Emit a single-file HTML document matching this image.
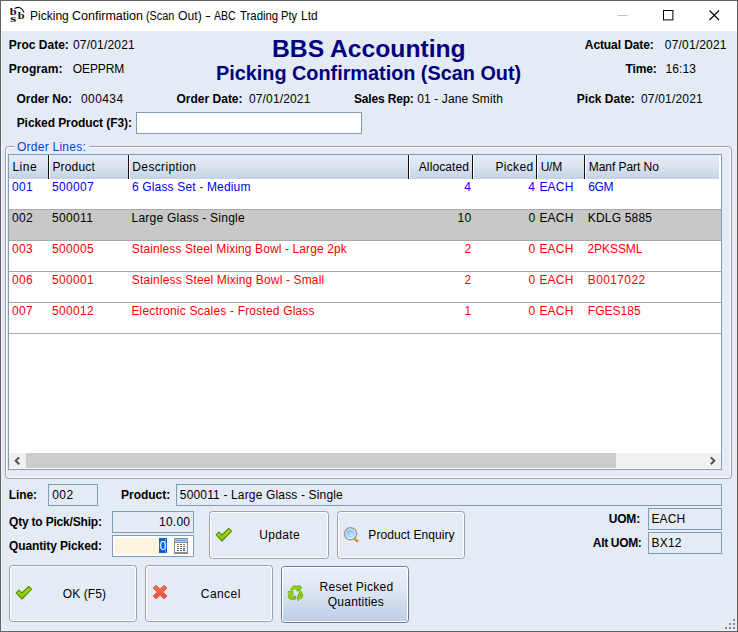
<!DOCTYPE html>
<html><head><meta charset="utf-8"><title>Picking Confirmation (Scan Out) - ABC Trading Pty Ltd</title>
<style>
*{box-sizing:border-box;margin:0;padding:0}
html,body{width:738px;height:632px;overflow:hidden;background:#e4ebf5}
body{font-family:"Liberation Sans",sans-serif;font-size:12px;color:#000;position:relative}
.a{position:absolute}
.win{position:absolute;left:0;top:0;width:738px;height:632px;background:#e4ebf5;border:1px solid #636363;box-shadow:inset 1px 0 0 #edf1f8, inset 0 -1px 0 #edf1f8}
.tb{position:absolute;left:1px;top:1px;width:736px;height:30px;background:#fff}
.t{position:absolute;white-space:nowrap}
.ttl{position:absolute;left:0;top:0;width:0;height:0}
.fld{position:absolute;border:1px solid #7f9db9;background:#e4ebf5;height:22px}
.btn{position:absolute;border:1px solid #a0a0a0;border-radius:3.5px;background:#e5ebf5;box-shadow:inset 0 0 0 1px #fff}
.hdr{position:absolute;left:9px;top:155px;width:710px;height:24px;background:linear-gradient(#e5ebf5,#dbe4f0 45%,#c4d2e6)}
.sep{position:absolute;top:155px;width:2px;height:24px;border-left:1px solid #101010;border-right:1px solid #fff}
.rl{position:absolute;left:9px;width:712px;height:1px;background:#a9a9a9}
.sb{position:absolute;left:9px;top:453px;width:712px;height:15px;background:#f0f0f0}
.sb .thumb{position:absolute;left:17px;top:0;width:590px;height:15px;background:#cdcdcd}
.sb svg{position:absolute;top:0}
</style></head><body>
<div class="win"></div>
<div class="tb"></div>
<svg class="a" style="left:8px;top:4px" width="20" height="20" viewBox="8 4 20 20">
<g font-family="'Liberation Serif',serif" font-weight="bold" font-size="10.8px" fill="#111">
<text x="9.7" y="14.9" textLength="6.9" lengthAdjust="spacingAndGlyphs">b</text><text x="17.7" y="18.9" textLength="6.9" lengthAdjust="spacingAndGlyphs">b</text><text x="10" y="21.9" textLength="6.2" lengthAdjust="spacingAndGlyphs">s</text></g>
<path d="M14.6 8.6 Q20.5 4.8 24.1 12.4" fill="none" stroke="#111" stroke-width="1.1"/>
</svg>

<svg class="a" style="left:600px;top:0" width="138" height="31" viewBox="0 0 138 31">
<path d="M17.5 15.5H27.5" stroke="#c0c0c0" stroke-width="1" fill="none"/>
<rect x="63.5" y="10.5" width="9.4" height="9.4" fill="none" stroke="#000" stroke-width="1"/>
<path d="M109.5 10.5L119 20M119 10.5L109.5 20" stroke="#000" stroke-width="1.1" fill="none"/>
</svg>

<div class="fld" style="left:136px;top:112px;width:226px;background:#fff"></div>

<!-- group box -->
<div class="a" style="left:5px;top:146px;width:727px;height:333px;border:1px solid #a0a0a0;border-radius:4px;box-shadow:inset 0 0 0 1px #fff"></div>

<!-- table -->
<div class="a" style="left:8px;top:154px;width:714px;height:316px;border:1px solid #7f9db9;background:#fff"></div>
<div class="hdr"></div>
<div class="sep" style="left:48px"></div><div class="sep" style="left:128px"></div><div class="sep" style="left:408px"></div><div class="sep" style="left:472px"></div><div class="sep" style="left:536px"></div><div class="sep" style="left:584px"></div>
<div class="a" style="left:9px;top:210px;width:712px;height:30px;background:#c8c8c8"></div>
<div class="rl" style="top:209px"></div><div class="rl" style="top:240px"></div><div class="rl" style="top:271px"></div><div class="rl" style="top:302px"></div><div class="rl" style="top:333px"></div>
<div class="sb"><div class="thumb"></div>
<svg style="left:0" width="17" height="15" viewBox="0 0 17 15"><path d="M10.2 4.4 L6.7 7.8 L10.2 11.2" fill="none" stroke="#505050" stroke-width="2"/></svg>
<svg style="right:0" width="17" height="15" viewBox="0 0 17 15"><path d="M6.8 4.4 L10.3 7.8 L6.8 11.2" fill="none" stroke="#505050" stroke-width="2"/></svg>
</div>

<!-- bottom fields -->
<div class="fld" style="left:48px;top:484px;width:50px"></div>
<div class="fld" style="left:176px;top:484px;width:546px"></div>
<div class="fld" style="left:112px;top:511px;width:82px"></div>
<div class="fld" style="left:112px;top:535px;width:82px;background:#fff"></div>
<div class="a" style="left:115px;top:538px;width:54px;height:16px;background:#fdf3df"></div>
<div class="a" style="left:159px;top:538px;width:8px;height:15px;background:#0a60d0"></div>
<div class="a" style="left:165px;top:538px;width:1px;height:15px;background:#e08020"></div>
<svg class="a" style="left:174px;top:538px" width="14" height="16" viewBox="0 0 14 16" shape-rendering="crispEdges">
<rect x="0" y="0" width="14" height="16" fill="#8c8c8c"/>
<rect x="1" y="1" width="12" height="3" fill="#a5cdf8"/>
<rect x="2" y="2" width="10" height="1" fill="#5c9ef0"/>
<rect x="1" y="5" width="12" height="9" fill="#fff"/>
<rect x="3" y="6" width="2" height="1" fill="#f06a10"/><rect x="6" y="6" width="2" height="1" fill="#707070"/><rect x="9" y="6" width="2" height="1" fill="#f06a10"/>
<rect x="3" y="8" width="2" height="1" fill="#707070"/><rect x="6" y="8" width="2" height="1" fill="#707070"/><rect x="9" y="8" width="2" height="1" fill="#707070"/>
<rect x="3" y="10" width="2" height="1" fill="#707070"/><rect x="6" y="10" width="2" height="1" fill="#707070"/>
<rect x="3" y="12" width="2" height="1" fill="#707070"/><rect x="6" y="12" width="2" height="1" fill="#707070"/>
<rect x="9" y="10" width="2" height="3" fill="#4a94f0"/>
</svg>
<div class="t" style="left:159.6px;top:538.8px;font-size:12px;line-height:14px;color:#fff">0</div>

<div class="fld" style="left:648px;top:508px;width:74px"></div>
<div class="fld" style="left:648px;top:532px;width:74px"></div>

<!-- buttons -->
<div class="btn" style="left:209px;top:511px;width:120px;height:48px"></div>
<div class="btn" style="left:337px;top:511px;width:128px;height:48px"></div>
<div class="btn" style="left:9px;top:565px;width:128px;height:57px"></div>
<div class="btn" style="left:145px;top:565px;width:128px;height:57px"></div>
<div class="btn" style="left:281px;top:566px;width:128px;height:57px;border-color:#6f7d92;background:linear-gradient(#eaf0f8,#dfe7f3 40%,#bccde6)"></div>
<svg width="0" height="0" style="position:absolute"><defs>
<linearGradient id="gk" x1="0" y1="0" x2="0" y2="1"><stop offset="0" stop-color="#c8dc10"/><stop offset="1" stop-color="#7cc000"/></linearGradient>
<radialGradient id="lens" cx="0.62" cy="0.68" r="0.75"><stop offset="0" stop-color="#b4ecfa"/><stop offset="0.7" stop-color="#8ccdf5"/><stop offset="1" stop-color="#4ea2ee"/></radialGradient>
<linearGradient id="gx" x1="0" y1="0" x2="0" y2="1"><stop offset="0" stop-color="#f47860"/><stop offset="1" stop-color="#ea4c32"/></linearGradient>
<linearGradient id="gr" x1="0" y1="0" x2="1" y2="1"><stop offset="0" stop-color="#a4dc08"/><stop offset="1" stop-color="#86c600"/></linearGradient>
</defs></svg>
<svg class="a" style="left:15px;top:585px" width="19" height="16" viewBox="0 0 19 16"><path d="M3.9 5.2 L7 8 L13.7 1.5 L16.5 4.2 L7 14 L1.2 7.9 Z" fill="url(#gk)" stroke="#4b9200" stroke-width="1.1" stroke-linejoin="round"/></svg>
<svg class="a" style="left:215px;top:527px" width="19" height="16" viewBox="0 0 19 16"><path d="M3.9 5.2 L7 8 L13.7 1.5 L16.5 4.2 L7 14 L1.2 7.9 Z" fill="url(#gk)" stroke="#4b9200" stroke-width="1.1" stroke-linejoin="round"/></svg>
<svg class="a" style="left:152px;top:584px" width="16" height="16" viewBox="0 0 16 16">
<path d="M4.05 1.25 L8.05 5.25 L12.05 1.25 L14.85 4.05 L10.85 8.05 L14.85 12.05 L12.05 14.85 L8.05 10.85 L4.05 14.85 L1.25 12.05 L5.25 8.05 L1.25 4.05 Z" fill="url(#gx)" stroke="#de4528" stroke-width="0.9" stroke-linejoin="round"/>
</svg>
<svg class="a" style="left:343px;top:526px" width="18" height="18" viewBox="0 0 18 18">
<path d="M11.6 12 L14 14.6" stroke="#d98c1c" stroke-width="3.2" stroke-linecap="round"/>
<path d="M12.6 11.6 L14.4 13.4" stroke="#fdf0d4" stroke-width="1.1" stroke-linecap="round"/>
<circle cx="7.5" cy="7.8" r="6" fill="#fff" stroke="#9a9a9a" stroke-width="1.6"/>
<circle cx="7.5" cy="7.8" r="4.3" fill="url(#lens)"/>
</svg>
<svg class="a" style="left:287px;top:585px" width="17" height="17" viewBox="0 0 17 17">
<g fill="url(#gr)" stroke="#55a200" stroke-width="0.7" stroke-linejoin="round">
<path d="M3.5 4.4 L5.7 1.5 L6.6 1.0 L10.6 1.0 L11.2 0.3 L14.8 2.2 L12.6 5.9 L9.7 5.9 L10.3 3.8 L7.3 3.8 L5.7 5.7 Z"/><path d="M14.0 6.3 L15.8 10.2 L15.3 12.6 L13.4 13.8 L11.5 13.8 L11.5 16.0 L10.1 12.5 L11.6 9.2 L11.6 11.1 L12.7 11.1 L13.2 10.2 L11.9 7.5 Z"/><path d="M1.0 6.5 L5.3 6.3 L6.5 9.4 L4.9 8.9 L4.1 10.4 L4.5 11.2 L8.6 11.2 L8.6 14.2 L3.5 14.2 L1.9 13.3 L1.2 11.0 L2.4 8.3 L0.8 7.7 Z"/>
</g></svg>

<!-- resize grip -->
<svg class="a" style="left:724px;top:618px" width="12" height="12" viewBox="0 0 12 12" fill="#8a8a8a"><rect x="9" y="1" width="2" height="2"/><rect x="5" y="5" width="2" height="2"/><rect x="9" y="5" width="2" height="2"/><rect x="1" y="9" width="2" height="2"/><rect x="5" y="9" width="2" height="2"/><rect x="9" y="9" width="2" height="2"/></svg>

<div class="t" style="left:8.70px;top:37.84px;font-size:12px;line-height:14px;letter-spacing:0.015px;color:#000;font-weight:bold">Proc Date:</div>
<div class="t" style="left:72.93px;top:37.84px;font-size:12px;line-height:14px;letter-spacing:0.188px;color:#000">07/01/2021</div>
<div class="t" style="left:8.70px;top:61.84px;font-size:12px;line-height:14px;letter-spacing:0.073px;color:#000;font-weight:bold">Program:</div>
<div class="t" style="left:72.83px;top:61.84px;font-size:12px;line-height:14px;letter-spacing:-0.111px;color:#000">OEPPRM</div>
<div class="t" style="left:584.80px;top:37.84px;font-size:12px;line-height:14px;letter-spacing:-0.087px;color:#000;font-weight:bold">Actual Date:</div>
<div class="t" style="left:664.83px;top:37.84px;font-size:12px;line-height:14px;letter-spacing:0.177px;color:#000">07/01/2021</div>
<div class="t" style="left:625.57px;top:61.84px;font-size:12px;line-height:14px;letter-spacing:-0.154px;color:#000;font-weight:bold">Time:</div>
<div class="t" style="left:665.59px;top:61.84px;font-size:12px;line-height:14px;letter-spacing:0.078px;color:#000">16:13</div>
<div class="t" style="left:16.51px;top:91.84px;font-size:12px;line-height:14px;letter-spacing:-0.057px;color:#000;font-weight:bold">Order No:</div>
<div class="t" style="left:81.03px;top:91.84px;font-size:12px;line-height:14px;letter-spacing:0.415px;color:#000">000434</div>
<div class="t" style="left:176.51px;top:91.84px;font-size:12px;line-height:14px;letter-spacing:0.003px;color:#000;font-weight:bold">Order Date:</div>
<div class="t" style="left:248.93px;top:91.84px;font-size:12px;line-height:14px;letter-spacing:0.155px;color:#000">07/01/2021</div>
<div class="t" style="left:353.95px;top:91.84px;font-size:12px;line-height:14px;letter-spacing:-0.162px;color:#000;font-weight:bold">Sales Rep:</div>
<div class="t" style="left:417.23px;top:91.84px;font-size:12px;line-height:14px;letter-spacing:0.115px;color:#000">01 - Jane Smith</div>
<div class="t" style="left:576.80px;top:91.84px;font-size:12px;line-height:14px;letter-spacing:0.004px;color:#000;font-weight:bold">Pick Date:</div>
<div class="t" style="left:641.03px;top:91.84px;font-size:12px;line-height:14px;letter-spacing:0.177px;color:#000">07/01/2021</div>
<div class="t" style="left:16.70px;top:115.84px;font-size:12px;line-height:14px;letter-spacing:-0.075px;color:#000;font-weight:bold">Picked Product (F3):</div>
<div class="t" style="left:12.42px;top:159.84px;font-size:12px;line-height:14px;letter-spacing:0.543px;color:#000">Line</div>
<div class="t" style="left:52.42px;top:159.84px;font-size:12px;line-height:14px;letter-spacing:0.169px;color:#000">Product</div>
<div class="t" style="left:132.32px;top:159.84px;font-size:12px;line-height:14px;letter-spacing:0.364px;color:#000">Description</div>
<div class="t" style="left:418.78px;top:159.84px;font-size:12px;line-height:14px;letter-spacing:0.104px;color:#000">Allocated</div>
<div class="t" style="left:495.52px;top:159.84px;font-size:12px;line-height:14px;letter-spacing:0.308px;color:#000">Picked</div>
<div class="t" style="left:540.67px;top:159.84px;font-size:12px;line-height:14px;letter-spacing:-0.243px;color:#000">U/M</div>
<div class="t" style="left:588.82px;top:159.84px;font-size:12px;line-height:14px;letter-spacing:-0.064px;color:#000">Manf Part No</div>
<div class="t" style="left:8.70px;top:487.84px;font-size:12px;line-height:14px;letter-spacing:-0.102px;color:#000;font-weight:bold">Line:</div>
<div class="t" style="left:52.13px;top:487.84px;font-size:12px;line-height:14px;letter-spacing:0.575px;color:#000">002</div>
<div class="t" style="left:121.00px;top:487.84px;font-size:12px;line-height:14px;letter-spacing:-0.01px;color:#000;font-weight:bold">Product:</div>
<div class="t" style="left:179.82px;top:487.84px;font-size:12px;line-height:14px;letter-spacing:0.157px;color:#000">500011 - Large Glass - Single</div>
<div class="t" style="left:9.01px;top:514.84px;font-size:12px;line-height:14px;letter-spacing:-0.192px;color:#000;font-weight:bold">Qty to Pick/Ship:</div>
<div class="t" style="left:158.99px;top:514.84px;font-size:12px;line-height:14px;letter-spacing:0.238px;color:#000">10.00</div>
<div class="t" style="left:9.01px;top:538.84px;font-size:12px;line-height:14px;letter-spacing:-0.116px;color:#000;font-weight:bold">Quantity Picked:</div>
<div class="t" style="left:608.68px;top:511.84px;font-size:12px;line-height:14px;letter-spacing:-0.172px;color:#000;font-weight:bold">UOM:</div>
<div class="t" style="left:651.52px;top:511.84px;font-size:12px;line-height:14px;letter-spacing:0.074px;color:#000">EACH</div>
<div class="t" style="left:592.80px;top:535.84px;font-size:12px;line-height:14px;letter-spacing:-0.324px;color:#000;font-weight:bold">Alt UOM:</div>
<div class="t" style="left:651.52px;top:535.84px;font-size:12px;line-height:14px;letter-spacing:0.177px;color:#000">BX12</div>
<div class="t" style="left:259.37px;top:527.84px;font-size:12px;line-height:14px;letter-spacing:0.313px;color:#000">Update</div>
<div class="t" style="left:368.32px;top:527.84px;font-size:12px;line-height:14px;letter-spacing:0.066px;color:#000">Product Enquiry</div>
<div class="t" style="left:62.83px;top:586.84px;font-size:12px;line-height:14px;letter-spacing:0.091px;color:#000">OK (F5)</div>
<div class="t" style="left:200.79px;top:586.84px;font-size:12px;line-height:14px;letter-spacing:0.432px;color:#000">Cancel</div>
<div class="t" style="left:319.62px;top:579.84px;font-size:12px;line-height:14px;letter-spacing:0.251px;color:#000">Reset Picked</div>
<div class="t" style="left:327.83px;top:594.84px;font-size:12px;line-height:14px;letter-spacing:0.208px;color:#000">Quantities</div>
<div class="t" style="left:16.93px;top:139.84px;font-size:12px;line-height:14px;letter-spacing:0.258px;color:#0046d5;background:#e4ebf5;padding:0 3px 0 2px;margin-left:-2px">Order Lines:</div>
<div class="t" style="left:12.03px;top:179.84px;font-size:12px;line-height:14px;letter-spacing:0.317px;color:#0000ff">001</div>
<div class="t" style="left:52.12px;top:179.84px;font-size:12px;line-height:14px;letter-spacing:0.328px;color:#0000ff">500007</div>
<div class="t" style="left:131.89px;top:179.84px;font-size:12px;line-height:14px;letter-spacing:0.165px;color:#0000ff">6 Glass Set - Medium</div>
<div class="t" style="left:464.28px;top:179.84px;font-size:12px;line-height:14px;letter-spacing:0.33px;color:#0000ff">4</div>
<div class="t" style="left:528.28px;top:179.84px;font-size:12px;line-height:14px;letter-spacing:0.33px;color:#0000ff">4</div>
<div class="t" style="left:539.42px;top:179.84px;font-size:12px;line-height:14px;letter-spacing:0.208px;color:#0000ff">EACH</div>
<div class="t" style="left:588.19px;top:179.84px;font-size:12px;line-height:14px;letter-spacing:-0.405px;color:#0000ff">6GM</div>
<div class="t" style="left:12.03px;top:210.84px;font-size:12px;line-height:14px;letter-spacing:0.325px;color:#000">002</div>
<div class="t" style="left:52.12px;top:210.84px;font-size:12px;line-height:14px;letter-spacing:0.325px;color:#000">500011</div>
<div class="t" style="left:131.52px;top:210.84px;font-size:12px;line-height:14px;letter-spacing:0.231px;color:#000">Large Glass - Single</div>
<div class="t" style="left:457.39px;top:210.84px;font-size:12px;line-height:14px;letter-spacing:0.33px;color:#000">10</div>
<div class="t" style="left:528.39px;top:210.84px;font-size:12px;line-height:14px;letter-spacing:0.33px;color:#000">0</div>
<div class="t" style="left:539.42px;top:210.84px;font-size:12px;line-height:14px;letter-spacing:0.208px;color:#000">EACH</div>
<div class="t" style="left:587.82px;top:210.84px;font-size:12px;line-height:14px;letter-spacing:0.185px;color:#000">KDLG 5885</div>
<div class="t" style="left:12.03px;top:241.84px;font-size:12px;line-height:14px;letter-spacing:0.287px;color:#ff0000">003</div>
<div class="t" style="left:52.12px;top:241.84px;font-size:12px;line-height:14px;letter-spacing:0.308px;color:#ff0000">500005</div>
<div class="t" style="left:131.86px;top:241.84px;font-size:12px;line-height:14px;letter-spacing:0.107px;color:#ff0000">Stainless Steel Mixing Bowl - Large 2pk</div>
<div class="t" style="left:464.53px;top:241.84px;font-size:12px;line-height:14px;letter-spacing:0.33px;color:#ff0000">2</div>
<div class="t" style="left:528.39px;top:241.84px;font-size:12px;line-height:14px;letter-spacing:0.33px;color:#ff0000">0</div>
<div class="t" style="left:539.42px;top:241.84px;font-size:12px;line-height:14px;letter-spacing:0.208px;color:#ff0000">EACH</div>
<div class="t" style="left:587.50px;top:241.84px;font-size:12px;line-height:14px;letter-spacing:-0.076px;color:#ff0000">2PKSSML</div>
<div class="t" style="left:12.03px;top:272.84px;font-size:12px;line-height:14px;letter-spacing:0.287px;color:#ff0000">006</div>
<div class="t" style="left:52.12px;top:272.84px;font-size:12px;line-height:14px;letter-spacing:0.325px;color:#ff0000">500001</div>
<div class="t" style="left:131.86px;top:272.84px;font-size:12px;line-height:14px;letter-spacing:0.143px;color:#ff0000">Stainless Steel Mixing Bowl - Small</div>
<div class="t" style="left:464.53px;top:272.84px;font-size:12px;line-height:14px;letter-spacing:0.33px;color:#ff0000">2</div>
<div class="t" style="left:528.39px;top:272.84px;font-size:12px;line-height:14px;letter-spacing:0.33px;color:#ff0000">0</div>
<div class="t" style="left:539.42px;top:272.84px;font-size:12px;line-height:14px;letter-spacing:0.208px;color:#ff0000">EACH</div>
<div class="t" style="left:587.82px;top:272.84px;font-size:12px;line-height:14px;letter-spacing:0.367px;color:#ff0000">B0017022</div>
<div class="t" style="left:12.03px;top:303.84px;font-size:12px;line-height:14px;letter-spacing:0.325px;color:#ff0000">007</div>
<div class="t" style="left:52.12px;top:303.84px;font-size:12px;line-height:14px;letter-spacing:0.328px;color:#ff0000">500012</div>
<div class="t" style="left:131.42px;top:303.84px;font-size:12px;line-height:14px;letter-spacing:0.179px;color:#ff0000">Electronic Scales - Frosted Glass</div>
<div class="t" style="left:464.51px;top:303.84px;font-size:12px;line-height:14px;letter-spacing:0.33px;color:#ff0000">1</div>
<div class="t" style="left:528.39px;top:303.84px;font-size:12px;line-height:14px;letter-spacing:0.33px;color:#ff0000">0</div>
<div class="t" style="left:539.42px;top:303.84px;font-size:12px;line-height:14px;letter-spacing:0.208px;color:#ff0000">EACH</div>
<div class="t" style="left:587.82px;top:303.84px;font-size:12px;line-height:14px;letter-spacing:0.032px;color:#ff0000">FGES185</div>
<div class="t" style="left:272.05px;top:33.96px;font-size:24.66px;line-height:30px;letter-spacing:0px;color:#000080;font-weight:bold">BBS Accounting</div>
<div class="t" style="left:215.97px;top:60.63px;font-size:19.83px;line-height:24px;letter-spacing:0px;color:#000080;font-weight:bold">Picking Confirmation (Scan Out)</div>
<div class="ttl"><span class="t" style="left:29.81px;top:8.84px;font-size:12px;line-height:14px;color:#000;transform:scaleX(1.002);transform-origin:0 0">Picking</span> <span class="t" style="left:72.06px;top:8.84px;font-size:12px;line-height:14px;color:#000;transform:scaleX(1.044);transform-origin:0 0">Confirmation</span> <span class="t" style="left:146.33px;top:8.84px;font-size:12px;line-height:14px;color:#000;transform:scaleX(0.902);transform-origin:0 0">(Scan</span> <span class="t" style="left:178.02px;top:8.84px;font-size:12px;line-height:14px;color:#000;transform:scaleX(1.017);transform-origin:0 0">Out)</span> <span class="t" style="left:204.60px;top:8.84px;font-size:12px;line-height:14px;color:#000;transform:scaleX(1.502);transform-origin:0 0">-</span> <span class="t" style="left:213.58px;top:8.84px;font-size:12px;line-height:14px;color:#000;transform:scaleX(0.880);transform-origin:0 0">ABC</span> <span class="t" style="left:239.54px;top:8.84px;font-size:12px;line-height:14px;color:#000;transform:scaleX(0.948);transform-origin:0 0">Trading</span> <span class="t" style="left:281.29px;top:8.84px;font-size:12px;line-height:14px;color:#000;transform:scaleX(0.925);transform-origin:0 0">Pty</span> <span class="t" style="left:300.82px;top:8.84px;font-size:12px;line-height:14px;color:#000;transform:scaleX(0.998);transform-origin:0 0">Ltd</span></div>
</body></html>
